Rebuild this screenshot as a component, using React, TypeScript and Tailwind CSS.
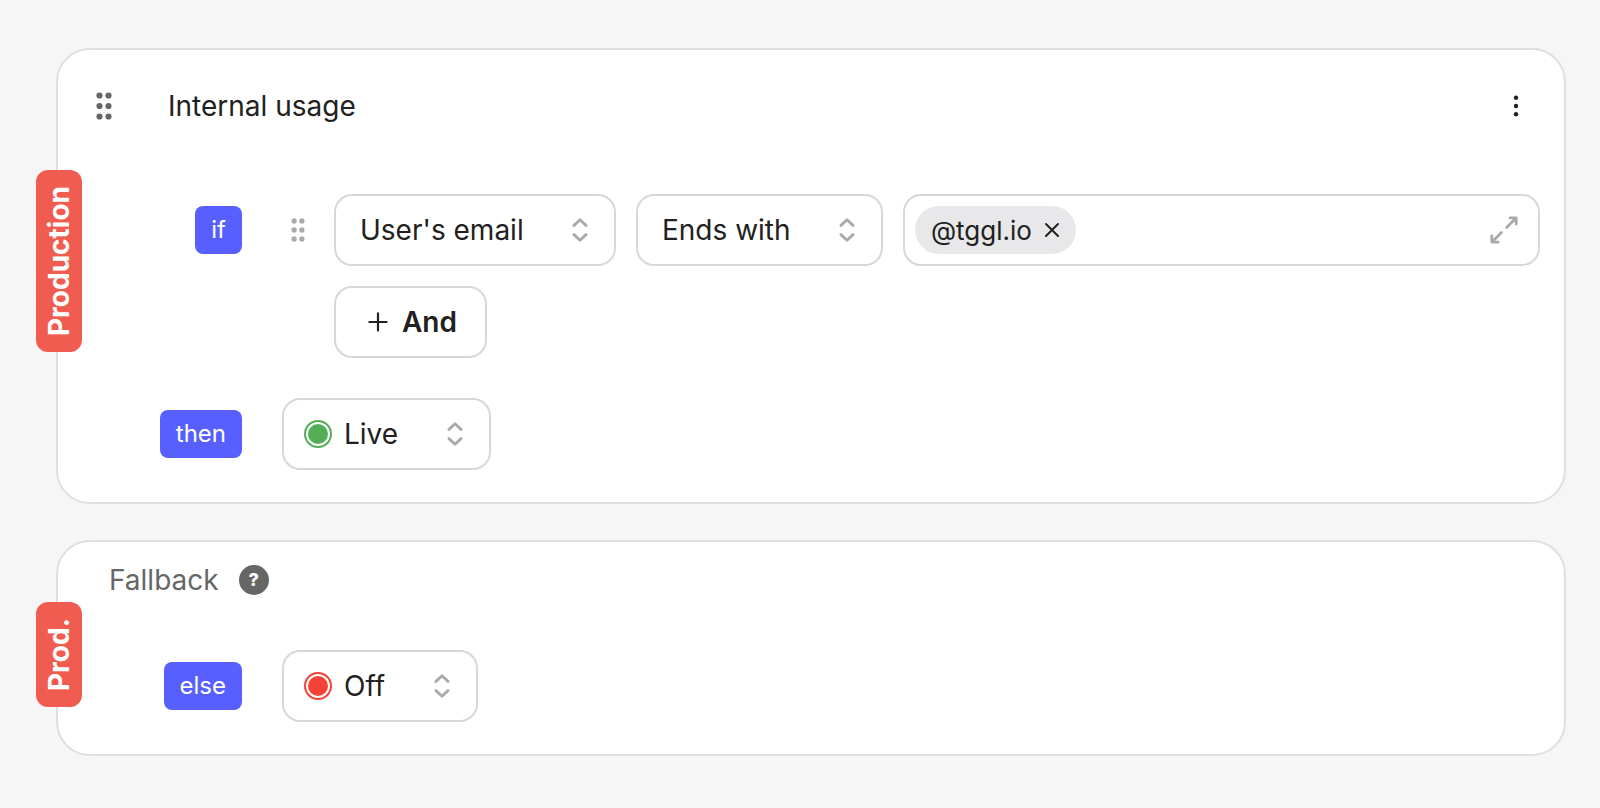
import { useState, type ReactNode } from 'react';

interface Option {
  value: string;
  label: string;
}

const attributes: Option[] = [{ value: 'email', label: "User's email" }];
const operators: Option[] = [{ value: 'ends_with', label: 'Ends with' }];
const liveVariations: Option[] = [{ value: 'live', label: 'Live' }];
const offVariations: Option[] = [{ value: 'off', label: 'Off' }];

function DragDots({ className }: { className: string }) {
  return (
    <svg viewBox="0 0 16 28" fill="currentColor" className={className} aria-hidden="true">
      {[3.5, 14, 24.5].map((y) => (
        <g key={y}>
          <circle cx="3.5" cy={y} r="3.1" />
          <circle cx="12.5" cy={y} r="3.1" />
        </g>
      ))}
    </svg>
  );
}

function Chevrons() {
  return (
    <svg
      viewBox="0 0 16 26"
      fill="none"
      stroke="currentColor"
      strokeWidth="2.9"
      strokeLinecap="round"
      strokeLinejoin="round"
      className="pointer-events-none absolute top-1/2 right-7 h-[26px] w-4 -translate-y-1/2 text-[#a9abab]"
      aria-hidden="true"
    >
      <path d="M2 8.4 8 2.8l6 5.6M2 17.6l6 5.6 6-5.6" />
    </svg>
  );
}

function Keyword({ children }: { children: ReactNode }) {
  return (
    <div className="flex w-[184px] shrink-0 justify-end">
      <span className="flex h-12 items-center rounded-lg bg-[#575fff] px-4 text-2xl text-white">{children}</span>
    </div>
  );
}

function EnvironmentTag({ name, className }: { name: string; className: string }) {
  return (
    <div
      className={`absolute -left-[22px] w-[46px] rotate-180 rounded-xl bg-[#f15c50] px-4 text-[28px] leading-[46px] font-bold text-white [writing-mode:vertical-rl] ${className}`}
    >
      {name}
    </div>
  );
}

interface SelectProps {
  label: string;
  options: Option[];
  status?: 'on' | 'off';
}

function Select({ label, options, status }: SelectProps) {
  const [value, setValue] = useState(options[0].value);

  return (
    <div className="relative shrink-0">
      {status && (
        <span
          className={`pointer-events-none absolute top-1/2 left-[22px] size-7 -translate-y-1/2 rounded-full border-2 p-0.5 ${status === 'on' ? 'border-[#52ae55]' : 'border-[#f44336]'}`}
        >
          <span className={`block size-full rounded-full ${status === 'on' ? 'bg-[#52ae55]' : 'bg-[#f44336]'}`} />
        </span>
      )}
      <select
        aria-label={label}
        value={value}
        onChange={(e) => setValue(e.target.value)}
        className={`h-[72px] appearance-none rounded-[18px] border-2 border-[#d8d8d8] bg-white pr-[90px] text-[28px] outline-none ${status ? 'pl-[60px]' : 'pl-6'}`}
      >
        {options.map((option) => (
          <option key={option.value} value={option.value}>
            {option.label}
          </option>
        ))}
      </select>
      <Chevrons />
    </div>
  );
}

function TagsInput() {
  const [tags, setTags] = useState(['@tggl.io']);
  const [draft, setDraft] = useState('');

  const addTag = () => {
    if (!draft.trim()) return;
    setTags([...tags, draft.trim()]);
    setDraft('');
  };

  return (
    <div className="flex h-[72px] min-w-0 flex-1 items-center gap-2 rounded-[18px] border-2 border-[#d8d8d8] bg-white pr-5 pl-2.5">
      {tags.map((tag) => (
        <span key={tag} className="flex h-12 shrink-0 items-center gap-3 rounded-full bg-[#e8e8ea] px-4 text-[26px]">
          {tag}
          <button aria-label={`Remove ${tag}`} onClick={() => setTags(tags.filter((t) => t !== tag))}>
            <svg viewBox="0 0 16 16" className="size-4" fill="none" stroke="currentColor" strokeWidth="2" strokeLinecap="round">
              <path d="m2 2 12 12M14 2 2 14" />
            </svg>
          </button>
        </span>
      ))}
      <input
        aria-label="Values"
        value={draft}
        onChange={(e) => setDraft(e.target.value)}
        onKeyDown={(e) => e.key === 'Enter' && addTag()}
        className="min-w-0 flex-1 bg-transparent text-[28px] outline-none"
      />
      <button aria-label="Expand" className="shrink-0 text-[#a9abab]">
        <svg
          viewBox="0 0 28 28"
          className="size-7"
          fill="none"
          stroke="currentColor"
          strokeWidth="2.8"
          strokeLinecap="round"
          strokeLinejoin="round"
        >
          <path d="M16.6 11.4 26 2M20 1.9h6.2v6.3M11.4 16.6 2 26M1.8 19.8v6.3h6.4" />
        </svg>
      </button>
    </div>
  );
}

export default function App() {
  return (
    <main className="flex min-h-screen flex-col gap-9 bg-[#f6f6f6] pt-12 pr-[34px] pb-[52px] pl-14 font-['Inter',sans-serif] text-[#212121]">
      {/* Targeting rule */}
      <section className="relative rounded-[34px] border-2 border-[#dfdfdf] bg-white pt-7 pr-6 pb-8">
        <EnvironmentTag name="Production" className="top-[120px]" />

        <div className="flex h-14 items-center pr-4 pl-[38px]">
          <button aria-label="Reorder rule" className="cursor-grab text-[#666]">
            <DragDots className="h-7 w-4" />
          </button>
          <h2 className="ml-14 flex-1 text-[28px]">Internal usage</h2>
          <button aria-label="Rule actions">
            <svg viewBox="0 0 16 24" className="h-6 w-4" fill="currentColor">
              <circle cx="8" cy="3.8" r="2.2" />
              <circle cx="8" cy="12" r="2.2" />
              <circle cx="8" cy="20.2" r="2.2" />
            </svg>
          </button>
        </div>

        <div className="mt-[60px] flex items-center">
          <Keyword>if</Keyword>
          <button aria-label="Reorder condition" className="mr-7 ml-12 w-4 shrink-0 cursor-grab text-[#a9abab]">
            <DragDots className="h-6 w-4" />
          </button>
          <div className="flex min-w-0 flex-1 items-center gap-5">
            <Select label="Attribute" options={attributes} />
            <Select label="Operator" options={operators} />
            <TagsInput />
          </div>
        </div>

        <button className="mt-5 ml-[276px] flex h-[72px] items-center gap-3.5 rounded-[18px] border-2 border-[#d8d8d8] pr-7 pl-8 text-[28px] font-semibold">
          <svg viewBox="0 0 20 20" className="size-5" fill="none" stroke="currentColor" strokeWidth="2.2" strokeLinecap="round">
            <path d="M10 1.4v17.2M1.4 10h17.2" />
          </svg>
          And
        </button>

        <div className="mt-10 flex items-center gap-10">
          <Keyword>then</Keyword>
          <Select label="Variation" options={liveVariations} status="on" />
        </div>
      </section>

      {/* Fallback */}
      <section className="relative rounded-[34px] border-2 border-[#dfdfdf] bg-white pt-[18px] pr-6 pb-8">
        <EnvironmentTag name="Prod." className="top-[60px]" />

        <div className="flex h-10 items-center gap-5 pl-[51px] text-[#666]">
          <h2 className="text-[28px]">Fallback</h2>
          <button
            aria-label="About fallback"
            className="flex size-[30px] items-center justify-center rounded-full bg-[#666] text-lg font-extrabold text-white"
          >
            ?
          </button>
        </div>

        <div className="mt-[50px] flex items-center gap-10">
          <Keyword>else</Keyword>
          <Select label="Fallback variation" options={offVariations} status="off" />
        </div>
      </section>
    </main>
  );
}
